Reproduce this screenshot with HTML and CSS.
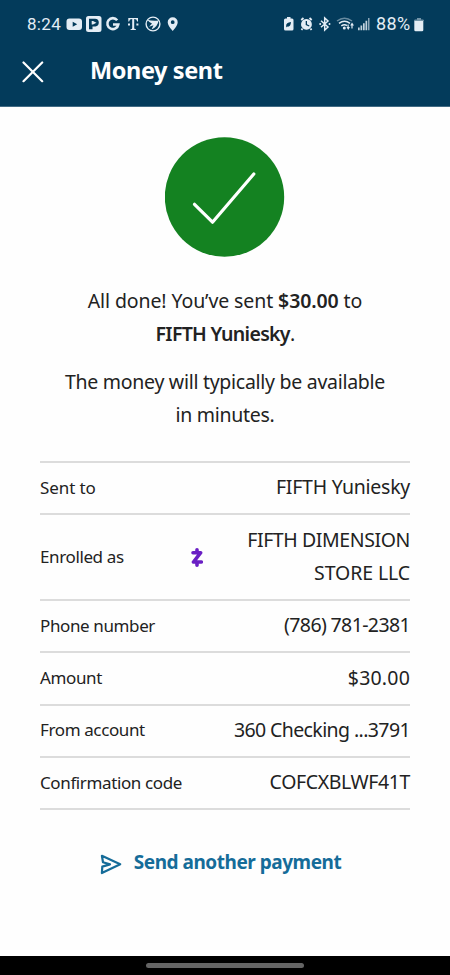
FILE: index.html
```html
<!DOCTYPE html>
<html lang="en">
<head>
<meta charset="utf-8">
<title>Money sent</title>
<link rel="stylesheet" href="styles.css">
</head>
<body>
<div class="screen">
  <header class="header">
    <div class="status">
      <span class="clock">8:24</span>
      <svg class="status-left" width="112" height="18" viewBox="0 0 112 18" fill="#e4edf5">
        <path fill-rule="evenodd" d="M3.5 3.5H13Q16 3.5 16 6.500V12Q16 15 13 15H3.500Q.5 15 .5 12V6.500Q.5 3.500 3.500 3.500ZM6.700 6.700V11.800L11.200 9.250Z"/>
        <path fill-rule="evenodd" d="M22.500 1H33Q35.500 1 35.500 3.500V14.500Q35.500 17 33 17H22.500Q20 17 20 14.500V3.500Q20 1 22.500 1ZM23 3.700V14.300H26.500V11.500H29.500Q32.800 11 32.800 7.600Q32.800 3.700 29 3.700ZM25.700 6V9.500H27L30.500 7.700L27 6Z"/>
        <path d="M51.200 5.200A5.500 5.500 0 1 0 52.300 9.500H47" fill="none" stroke="#e4edf5" stroke-width="2.600"/>
        <path d="M62.300 3H72V6.400H71.200Q70.900 4 68.200 4V13Q68.200 14.200 70 14.200V15H64.500V14.200Q66.200 14.200 66.200 13V4Q63.400 4 63.100 6.400H62.300ZM62 8.500H64V10.500H62ZM70.400 8.500H72.400V10.500H70.400Z"/>
        <circle cx="87" cy="9" r="6.900" fill="none" stroke="#e4edf5" stroke-width="1.400"/>
        <path d="M81.300 4.800Q86.500 6.300 92.500 5.500Q92 11.500 85.500 14.500L87.500 10.200L83 11.700L86 8.500Q83 7.500 81.300 4.800Z"/>
        <path fill-rule="evenodd" d="M106.700 2.200A5 5 0 0 1 111.700 7.200Q111.700 10.500 106.700 16Q101.700 10.500 101.700 7.200A5 5 0 0 1 106.700 2.200ZM106.700 5.300A1.900 1.900 0 1 0 106.700 9.100A1.900 1.900 0 1 0 106.700 5.300Z"/>
      </svg>
      <svg class="status-right" width="88" height="18" viewBox="0 0 88 18" fill="#e4edf5">
        <path fill-rule="evenodd" d="M3 2H6.500V3.500H8Q9.500 3.500 9.500 5V14Q9.500 15.500 8 15.500H1.500Q0 15.500 0 14V5Q0 3.500 1.500 3.500H3ZM2 12.500L3 11.500Q6.500 12.500 7 7Q2 7.500 2.200 10.500Z"/>
        <path fill-rule="evenodd" d="M22.500 4A5.400 5.400 0 1 1 22.400 4ZM21.700 6V10L25 11.400L25.500 10.400L23 9.200V6Z"/>
        <path d="M17.200 5L19.500 3M27.700 5L25.500 3M18.500 13.500L17.500 15M26.500 13.500L27.500 15" fill="none" stroke="#e4edf5" stroke-width="1.800"/>
        <path d="M37 5.700L44 12L40.700 15V3L44 6L37 12.300" fill="none" stroke="#e4edf5" stroke-width="1.500"/>
        <circle cx="36.200" cy="9" r="1"/><circle cx="45.500" cy="9" r="1"/>
        <g fill="none" stroke="#e4edf5" stroke-width="1.500">
          <path d="M53 6Q60.500 .5 68 6" opacity=".45"/>
          <path d="M55 8.300Q60.500 4.200 66 8.300M57.300 10.800Q60.500 8.600 63 10.600"/>
        </g>
        <circle cx="60.300" cy="13" r="1.500"/>
        <path d="M62.500 12H63.500V9.500H64.700V12H66L64.200 15ZM66.200 10.500L68 7.500L70 10.500H68.600V13.500H67.400V10.500Z"/>
        <path d="M74 12.500H75.700V15.300H74ZM76.500 10.500H78.200V15.300H76.500ZM79 8.200H80.700V15.300H79ZM81.500 5.700H83.200V15.300H81.500Z" opacity=".85"/>
        <path d="M84 3H85.500V15.300H84Z" opacity=".6"/>
      </svg>
      <span class="percent">88%</span>
      <svg class="battery" width="10" height="14" viewBox="0 0 10 14" fill="#e4edf5">
        <path d="M3 0H7V1.500H9Q10 1.500 10 3H0Q0 1.500 1 1.500H3Z" opacity=".5"/>
        <path d="M.3 3H9.300V12Q9.300 13.300 8 13.300H1.600Q.3 13.300 .3 12Z"/>
      </svg>
    </div>
    <div class="titlebar">
      <svg class="close" width="22" height="22" viewBox="0 0 22 22"><path d="M1.500 1.500L20.200 20.200M20.200 1.500L1.500 20.200"/></svg>
      <h1 class="title">Money sent</h1>
    </div>
  </header>
  <main class="content">
    <svg class="success" width="120" height="120" viewBox="0 0 120 120">
      <circle cx="59.500" cy="60" r="59.700" fill="#148221"/>
      <path d="M29.500 67.300L47.500 85.200L88.800 37"/>
    </svg>
    <p class="message"><span class="line-a">All done! You’ve sent <b>$30.00</b> to</span><br><span class="name"><b>FIFTH Yuniesky</b>.</span></p>
    <p class="message note">The money will typically be available<br>in minutes.</p>
    <dl class="details">
      <div class="row"><dt>Sent to</dt><dd class="v-name">FIFTH Yuniesky</dd></div>
      <div class="row">
        <dt>Enrolled as</dt>
        <svg class="zelle" width="12" height="19" viewBox="0 0 12 19"><path d="M2 4.700H9.700L2.500 14H10.300M6 1.800V4M6 15V17.200"/></svg>
        <dd class="v-store">FIFTH DIMENSION<br><span class="store">STORE LLC</span></dd>
      </div>
      <div class="row"><dt>Phone number</dt><dd class="v-phone">(786) 781-2381</dd></div>
      <div class="row"><dt>Amount</dt><dd class="v-amount">$30.00</dd></div>
      <div class="row"><dt>From account</dt><dd class="v-account">360 Checking ...3791</dd></div>
      <div class="row"><dt>Confirmation code</dt><dd class="v-code">COFCXBLWF41T</dd></div>
    </dl>
    <a class="again">
      <svg width="22" height="21" viewBox="0 0 22 21"><path d="M1.900 1.800L20.200 10.300L1.900 19L2.300 12.600L10 10.400L3 8.300Z"/></svg>
      <span>Send another payment</span>
    </a>
  </main>
  <footer class="navbar"><div class="pill"></div></footer>
</div>
</body>
</html>
```

FILE: styles.css
```css
* { box-sizing: border-box; }
body { margin: 0; font-family: "Noto Sans", sans-serif; color: #222; background: #fff; }
.screen { width: 450px; height: 975px; display: flex; flex-direction: column; overflow: hidden; background: #fefefe; }
.header { height: 107px; flex: none; background: #033b5b; border-bottom: 1px solid #426b84; color: #fff; }
.status { height: 48px; display: flex; align-items: center; padding: 0 27px 0; font: 17px/20px Roboto, sans-serif; color: #e4edf5; }
.clock { width: 39px; flex: none; white-space: nowrap; letter-spacing: .3px; }
.status-right { margin-left: 106px; }
.percent { width: 38px; margin-left: 4px; flex: none; font-size: 18px; letter-spacing: .4px; }
.battery { flex: none; margin-top: 1px; }
.status svg { flex: none; }
.titlebar { display: flex; align-items: center; height: 48px; padding-left: 22px; }
.close { fill: none; stroke: #fff; stroke-width: 2.2; stroke-linecap: round; }
.title { margin: -4px 0 0 46px; font-size: 23.500px; line-height: 32px; font-weight: 700; letter-spacing: -.4px; white-space: nowrap; }
.content { flex: 1; padding: 30px 40px 0; display: flex; flex-direction: column; align-items: center; }
.success { flex: none; }
.success path { fill: none; stroke: #fff; stroke-width: 3.2; stroke-linecap: round; stroke-linejoin: round; }
.message { margin: 27px 0 0; font-size: 19.500px; line-height: 33px; text-align: center; white-space: nowrap; }
.message b { font-weight: 600; }
.line-a { letter-spacing: -.1px; }
.name { letter-spacing: -.68px; }
.note { margin-top: 14.500px; letter-spacing: -.28px; }
.details { width: 370px; margin: 30.500px 0 0; border-top: 2px solid #dcdcdc; }
.row { display: flex; align-items: center; justify-content: space-between; padding: 7.400px 0 10px; border-bottom: 2px solid #dcdcdc; }
dt { padding-top: 2px; font-size: 17px; line-height: 24px; letter-spacing: -.38px; white-space: nowrap; }
.row:first-child dt { letter-spacing: -.1px; }
dd { margin: 0; font-size: 19.500px; line-height: 33px; text-align: right; white-space: nowrap; }
.v-name { letter-spacing: -.25px; }
.v-store { letter-spacing: -.4px; }
.store { letter-spacing: -.1px; }
.v-phone { letter-spacing: -.62px; }
.v-amount { letter-spacing: .2px; }
.v-account { letter-spacing: -.6px; }
.v-code { letter-spacing: -.38px; }
.zelle { margin: 3px 0 0 24px; fill: none; stroke: #6a1fc4; stroke-width: 3.600; stroke-linecap: round; stroke-linejoin: round; }
.again { display: flex; align-items: center; gap: 12px; margin: 36px 9px 0 0; font-size: 19px; font-weight: 700; line-height: 33px; letter-spacing: -.47px; color: #156c99; white-space: nowrap; }
.again svg { fill: none; stroke: #156c99; stroke-width: 2.200; stroke-linejoin: round; margin-top: 4px; }
.navbar { height: 19px; flex: none; background: #000; display: flex; justify-content: center; padding-top: 7px; }
.pill { width: 158px; height: 5px; border-radius: 3px; background: #646464; }
```
